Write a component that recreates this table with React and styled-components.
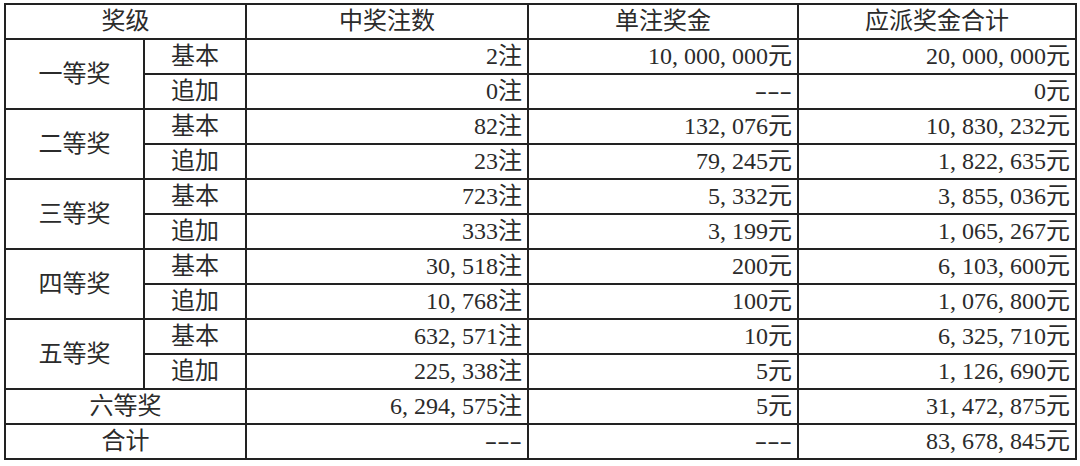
import React from 'react';
import styled, { createGlobalStyle } from 'styled-components';

const GlobalStyle = createGlobalStyle`
  html, body {
    margin: 0;
    padding: 0;
    background: #ffffff;
  }
  body {
    font-family: "Liberation Serif", "Noto Sans CJK SC", serif;
  }
`;

const Page = styled.div`
  width: 1080px;
  height: 466px;
  padding: 3px 0 0 4px;
  box-sizing: border-box;
  background: #ffffff;
`;

const Table = styled.table`
  width: 1071px;
  border-collapse: collapse;
  table-layout: fixed;
  font-family: "Liberation Serif", "Noto Sans CJK SC", serif;
  font-size: 24px;
  color: #2b2b2b;
`;

const Row = styled.tr`
  height: 35px;
`;

const Cell = styled.td`
  border: 2px solid #222222;
  padding: 0 ${({ $align }) => ($align === 'right' ? '5px' : '0')} 0 0;
  text-align: ${({ $align }) => $align || 'center'};
  vertical-align: middle;
  line-height: 31px;
  white-space: nowrap;
  font-weight: normal;
  font-family: inherit;
  font-size: inherit;
  color: inherit;
`;

const HeadCell = styled(Cell).attrs({ as: 'th' })``;

// half-width comma slot, as in the song-style font of the source
const Comma = styled.span`
  display: inline-block;
  width: 0.5em;
  text-align: left;
`;

// the source draws "---" with long, thin dashes
const Dash = styled.span`
  display: inline-block;
  font-family: "Liberation Serif", serif;
  font-size: 24px;
  letter-spacing: 0;
  transform: scaleX(1.55);
  transform-origin: right center;
`;

const Value = ({ text }) => {
  if (text === '---') return <Dash>{text}</Dash>;
  const parts = text.split(',');
  return parts.map((p, i) => (
    <React.Fragment key={i}>
      {i > 0 && <Comma>,</Comma>}
      {p}
    </React.Fragment>
  ));
};

const prizes = [
  {
    level: '一等奖',
    rows: [
      ['基本', '2注', '10,000,000元', '20,000,000元'],
      ['追加', '0注', '---', '0元'],
    ],
  },
  {
    level: '二等奖',
    rows: [
      ['基本', '82注', '132,076元', '10,830,232元'],
      ['追加', '23注', '79,245元', '1,822,635元'],
    ],
  },
  {
    level: '三等奖',
    rows: [
      ['基本', '723注', '5,332元', '3,855,036元'],
      ['追加', '333注', '3,199元', '1,065,267元'],
    ],
  },
  {
    level: '四等奖',
    rows: [
      ['基本', '30,518注', '200元', '6,103,600元'],
      ['追加', '10,768注', '100元', '1,076,800元'],
    ],
  },
  {
    level: '五等奖',
    rows: [
      ['基本', '632,571注', '10元', '6,325,710元'],
      ['追加', '225,338注', '5元', '1,126,690元'],
    ],
  },
];

const footer = [
  ['六等奖', '6,294,575注', '5元', '31,472,875元'],
  ['合计', '---', '---', '83,678,845元'],
];

const App = () => {
  return (
    <Page>
      <GlobalStyle />
      <Table>
        <colgroup>
          <col style={{ width: 139 }} />
          <col style={{ width: 102 }} />
          <col style={{ width: 282 }} />
          <col style={{ width: 270 }} />
          <col style={{ width: 278 }} />
        </colgroup>
        <thead>
          <Row>
            <HeadCell colSpan={2}>奖级</HeadCell>
            <HeadCell>中奖注数</HeadCell>
            <HeadCell>单注奖金</HeadCell>
            <HeadCell>应派奖金合计</HeadCell>
          </Row>
        </thead>
        <tbody>
          {prizes.map((prize) =>
            prize.rows.map((r, i) => (
              <Row key={prize.level + r[0]}>
                {i === 0 && <Cell rowSpan={2}>{prize.level}</Cell>}
                <Cell>{r[0]}</Cell>
                <Cell $align="right"><Value text={r[1]} /></Cell>
                <Cell $align="right"><Value text={r[2]} /></Cell>
                <Cell $align="right"><Value text={r[3]} /></Cell>
              </Row>
            ))
          )}
          {footer.map((r) => (
            <Row key={r[0]}>
              <Cell colSpan={2}>{r[0]}</Cell>
              <Cell $align="right"><Value text={r[1]} /></Cell>
              <Cell $align="right"><Value text={r[2]} /></Cell>
              <Cell $align="right"><Value text={r[3]} /></Cell>
            </Row>
          ))}
        </tbody>
      </Table>
    </Page>
  );
};

export default App;
